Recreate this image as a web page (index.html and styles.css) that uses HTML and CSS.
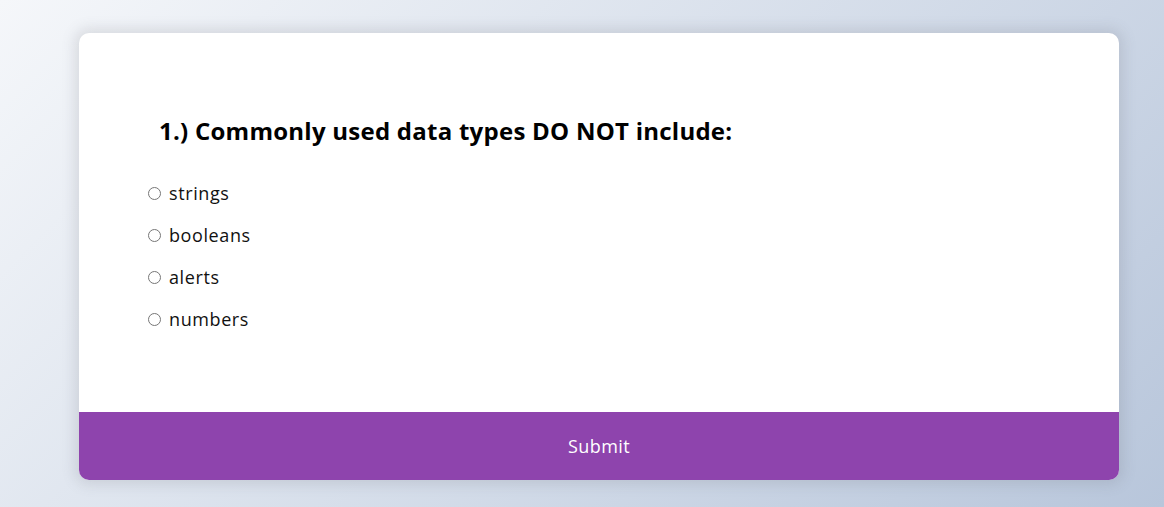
FILE: index.html
```html
<!DOCTYPE html>
<html>
<head>
<meta charset="utf-8">
<link rel="stylesheet" href="styles.css">
</head>
<body>
<div class="quiz-container">
  <div class="quiz-header">
    <h2 class="question">1.) Commonly used data types DO NOT include:</h2>
    <ul class="answers">
      <li class="answer"><input type="radio" name="answer" id="a"><label for="a">strings</label></li>
      <li class="answer"><input type="radio" name="answer" id="b"><label for="b">booleans</label></li>
      <li class="answer"><input type="radio" name="answer" id="c"><label for="c">alerts</label></li>
      <li class="answer"><input type="radio" name="answer" id="d"><label for="d">numbers</label></li>
    </ul>
  </div>
  <button class="submit">Submit</button>
</div>
</body>
</html>
```
FILE: styles.css
```css
html, body {
  margin: 0;
  height: 100%;
}
body {
  background-color: #b8c6db;
  background-image: linear-gradient(315deg, #b8c6db 0%, #f5f7fa 100%);
  font-family: "Open Sans", "Noto Sans", sans-serif;
  overflow: hidden;
  box-sizing: border-box;
  padding: 33px 0 0 79px;
}
.quiz-container {
  background: #fff;
  border-radius: 10px;
  box-shadow: 0 0 14px 4px rgba(100, 100, 111, 0.18);
  width: 1040px;
  overflow: hidden;
}
.quiz-header {
  padding: 64px;
}
.question {
  margin: 0;
  padding: 16px;
  font-size: 24px;
  line-height: 35px;
  font-weight: 700;
  letter-spacing: 0.25px;
  color: #000;
}
.answers {
  list-style: none;
  padding: 0;
  margin: 16px 0;
}
.answer {
  font-size: 18px;
  line-height: 26px;
  margin: 16px 0;
  display: flex;
  align-items: center;
}
.answer input {
  margin: 0 8px 0 5px;
  width: 13px;
  height: 13px;
}
.answer label {
  color: #111;
  letter-spacing: 0.6px;
}
.submit {
  display: block;
  width: 100%;
  border: none;
  background: #8e44ad;
  color: #fff;
  font-family: inherit;
  font-size: 18px;
  line-height: 26px;
  padding: 21px;
  letter-spacing: 0.4px;
}
```
